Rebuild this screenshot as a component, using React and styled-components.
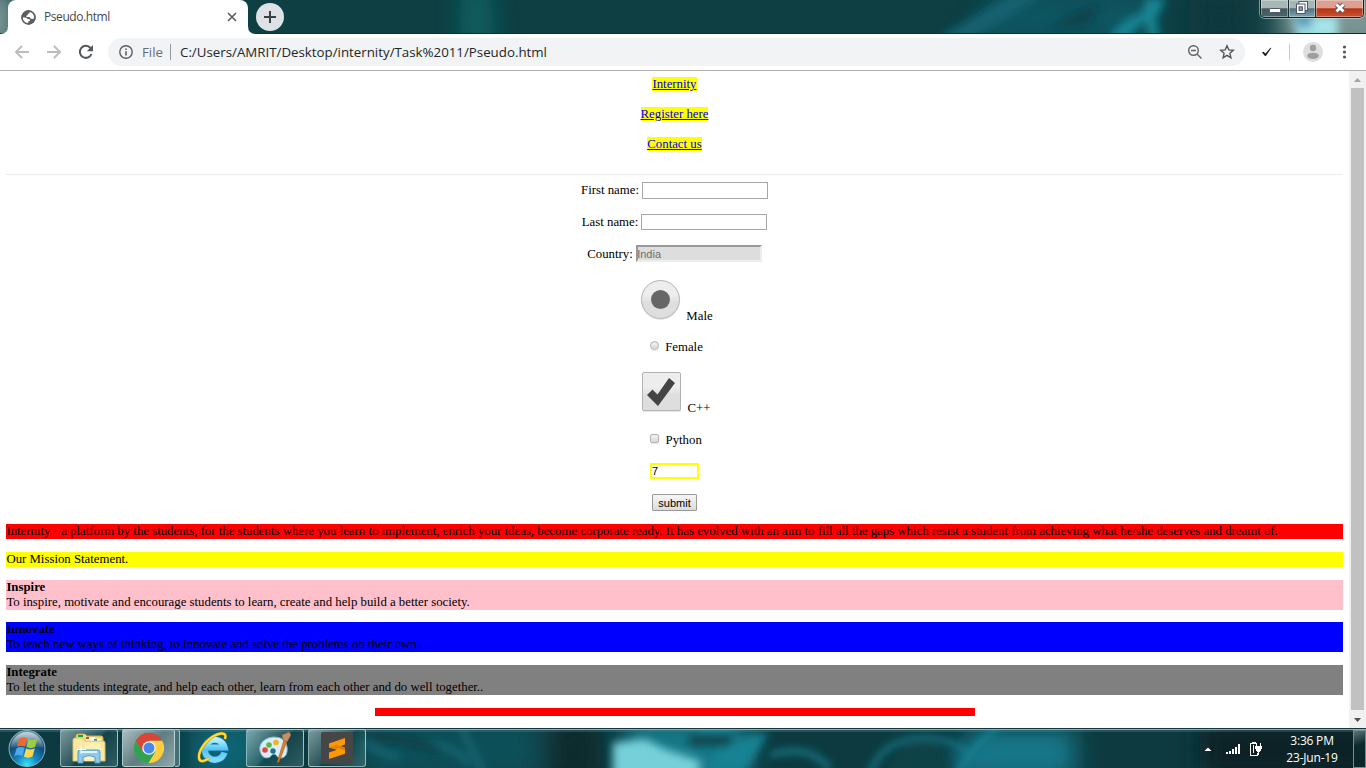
import React from 'react';
import styled, { createGlobalStyle } from 'styled-components';

const GlobalStyle = createGlobalStyle`
  * { box-sizing: border-box; }
  html, body { margin: 0; padding: 0; overflow: hidden; }
  svg { display: block; flex: none; }
`;

const ui = `'Open Sans', 'Noto Sans', sans-serif`;

const Screen = styled.div`
  width: 1366px;
  height: 768px;
  display: flex;
  flex-direction: column;
  background: #fff;
  overflow: hidden;
`;

/* ---------- title bar ---------- */
const TitleBar = styled.header`
  position: relative;
  height: 34px;
  flex: none;
  display: flex;
  background: #0d3f43;
  overflow: hidden;
`;
const Wallpaper = styled.svg`
  position: absolute;
  inset: 0;
`;
const Tab = styled.div`
  position: relative;
  width: 240px;
  height: 34px;
  margin-left: 8px;
  padding: 0 10px 0 13px;
  display: flex;
  align-items: center;
  background: #fff;
  border-radius: 8px 8px 0 0;
  font: 12px/34px ${ui};
  color: #45494d;
`;
const Flare = styled.svg`
  position: absolute;
  bottom: 0;
  ${(p) => (p.$side === 'left' ? 'left: -8px;' : 'right: -8px; transform: scaleX(-1);')}
`;
const TabTitle = styled.span`
  flex: 1;
  margin-left: 8px;
  letter-spacing: ${(p) => p.$track}px;
`;
const NewTab = styled.div`
  position: relative;
  width: 28px;
  height: 28px;
  margin: 3px 0 0 8px;
  border-radius: 50%;
  background: #dee1e6;
  display: flex;
  align-items: center;
  justify-content: center;
`;
const WindowControls = styled.div`
  position: relative;
  display: flex;
  width: 104px;
  height: 18px;
  margin: 0 2px 0 auto;
  border: 1px solid #122022;
  border-top: 0;
  border-radius: 0 0 5px 5px;
  box-shadow: 0 0 0 1px rgba(215, 235, 235, 0.5);
  overflow: hidden;
`;
const Control = styled.div`
  width: ${(p) => p.$w}px;
  display: flex;
  align-items: center;
  justify-content: center;
  padding-bottom: 2px;
  background: ${(p) => p.$bg};
  box-shadow: inset 0 0 0 1px rgba(230, 240, 240, 0.4);
  border-right: ${(p) => (p.$last ? '0' : '1px solid #1b2c2e')};
`;

/* ---------- toolbar ---------- */
const Toolbar = styled.div`
  height: 37px;
  flex: none;
  display: flex;
  align-items: center;
  padding: 0 13px 1px 12px;
  border-bottom: 1px solid #b1b1b1;
  background: #fff;
`;
const NavIcons = styled.div`
  display: flex;
  gap: 12px;
  width: 96px;
`;
const Omnibox = styled.div`
  width: 1137px;
  height: 28px;
  border-radius: 14px;
  background: #f1f3f4;
  display: flex;
  align-items: center;
  padding: 0 10px 0 10px;
  font: 13.3px/28px ${ui};
  color: #23262a;
`;
const Scheme = styled.span`
  width: 28px;
  margin-left: 8px;
  color: #6a6e73;
`;
const Divider = styled.span`
  width: 1px;
  height: 16px;
  margin-left: ${(p) => p.$ml || 0}px;
  background: ${(p) => p.$color};
`;
const Url = styled.span`
  flex: 1;
  margin-left: 9px;
`;
const OmniIcons = styled.div`
  display: flex;
  gap: 16px;
`;
const Extensions = styled.div`
  flex: 1;
  display: flex;
  align-items: center;
  justify-content: space-between;
  padding-left: 15px;
`;

/* ---------- page ---------- */
const Viewport = styled.main`
  height: 657px;
  flex: none;
  display: flex;
`;
const Page = styled.div`
  width: 1349px;
  padding: 6px 6px 0;
  font: 12.8px/15px 'Liberation Serif', serif;
  color: #000;
`;
const Row = styled.div`
  display: flex;
  justify-content: center;
  align-items: ${(p) => p.$align || 'center'};
  height: ${(p) => p.$h}px;
  margin-bottom: ${(p) => p.$gap}px;
  white-space: nowrap;
`;
const Link = styled.a`
  background: #ff0;
  color: #0000ee;
  height: 14px;
  line-height: 14px;
  text-decoration: underline;
`;
const Rule = styled.hr`
  height: 1px;
  margin: 0 0 7px;
  border: 0;
  background: #ececec;
`;
const Label = styled.label`
  margin-left: ${(p) => p.$ml || 0}px;
  margin-right: ${(p) => p.$mr || 0}px;
  position: relative;
  top: ${(p) => p.$drop || 0}px;
`;
const Field = styled.input`
  width: 126px;
  height: ${(p) => p.$h}px;
  padding: 0 1px;
  margin: 0;
  border-radius: 0;
  outline: 0;
  font: 11px 'Liberation Sans', sans-serif;
  color: #000;
  background: #fff;
  border: 1px solid #a6a6a6;
  &:disabled {
    color: #6d6d6d;
    background: #ddd;
    padding: 0;
    border: 2px solid;
    border-color: #999 #eee #eee #999;
    text-indent: -0.6px;
  }
`;
const NumberField = styled.input`
  width: 49px;
  height: 16px;
  padding: 0;
  margin: 0;
  border: 2px solid #ff0;
  outline: 0;
  font: 11px 'Liberation Sans', sans-serif;
  color: #000;
`;
const Choice = styled.span`
  width: ${(p) => p.$size}px;
  height: ${(p) => p.$size}px;
  border: 1px solid #b3b3b3;
  border-radius: ${(p) => (p.$round ? '50%' : '2px')};
  background: linear-gradient(#ededed 38%, #dedede 60%);
  box-shadow: 0 1px 1px rgba(0, 0, 0, 0.1);
  display: flex;
  align-items: center;
  justify-content: center;
  position: relative;
  top: ${(p) => p.$lift || 0}px;
`;
const Dot = styled.span`
  width: 19px;
  height: 19px;
  border-radius: 50%;
  background: #666;
`;
const Submit = styled.button`
  width: 45px;
  height: 17px;
  padding: 0;
  margin: 0;
  border: 1px solid #9a9a9a;
  border-radius: 1px;
  background: linear-gradient(#f6f6f6, #dcdcdc);
  font: 11px/16px 'Liberation Sans', sans-serif;
  color: #000;
`;
const Statement = styled.section`
  background: ${(p) => p.$bg};
  height: ${(p) => p.$h}px;
  margin-bottom: ${(p) => p.$gap}px;
  padding-left: 0.4px;
  white-space: nowrap;
`;
const Line = styled.div`
  font-weight: ${(p) => (p.$bold ? 700 : 400)};
  letter-spacing: ${(p) => p.$track || 0}px;
`;
const RedBar = styled.div`
  width: 600px;
  height: 8px;
  margin: 0 0 0 369px;
  background: #f00;
`;
const Scrollbar = styled.div`
  width: 17px;
  display: flex;
  flex-direction: column;
  align-items: center;
  background: #f1f1f1;
`;
const ScrollArrow = styled.div`
  height: 17px;
  display: flex;
  align-items: center;
`;
const Thumb = styled.div`
  width: 13px;
  height: 622px;
  margin-bottom: 1px;
  background: #c1c1c1;
`;

/* ---------- taskbar ---------- */
const Taskbar = styled.footer`
  position: relative;
  height: 40px;
  flex: none;
  display: flex;
  background: #0d3a40;
  border-top: 1px solid #17363c;
  overflow: hidden;
`;
const Start = styled.div`
  position: relative;
  width: 60px;
  padding: 0 0 0 8px;
`;
const TaskButton = styled.div`
  position: relative;
  width: ${(p) => p.$w}px;
  height: 38px;
  margin-right: ${(p) => p.$gap}px;
  padding-right: ${(p) => p.$pr || 0}px;
  display: flex;
  align-items: center;
  justify-content: center;
  border: 1px solid ${(p) => (p.$plain ? 'transparent' : 'rgba(205,232,232,.6)')};
  border-radius: 3px;
  background: ${(p) =>
    p.$plain
      ? 'none'
      : p.$active
      ? 'linear-gradient(135deg, rgba(225,235,235,.75), rgba(150,170,172,.6) 50%, rgba(190,205,206,.75))'
      : 'linear-gradient(135deg, rgba(190,215,215,.62), rgba(90,130,135,.38) 48%, rgba(35,85,92,.3) 52%, rgba(95,150,155,.4))'};
`;
const Stack = styled.div`
  position: relative;
  width: 5px;
  height: 38px;
  margin-right: 12px;
  border: 1px solid rgba(215, 235, 235, 0.65);
  border-left: 0;
  border-radius: 0 3px 3px 0;
  background: rgba(130, 160, 162, 0.5);
`;
const Tray = styled.div`
  position: relative;
  width: 162px;
  margin-left: auto;
  display: flex;
  align-items: center;
  font: 12px/17px ${ui};
  color: #fff;
`;
const Clock = styled.div`
  width: 80px;
  margin: 0 0 0 8px;
  text-align: center;
  letter-spacing: -0.2px;
  white-space: nowrap;
`;
const ShowDesktop = styled.div`
  width: 13px;
  height: 38px;
  margin-left: auto;
  border: 1px solid #6e8f8f;
  background: linear-gradient(160deg, #5b7474, #0c2a2b 40%, #0d2526);
`;

const Blurs = () => (
  <defs>
    <filter id="soft" x="-50%" y="-50%" width="200%" height="200%"><feGaussianBlur stdDeviation="4" /></filter>
    <filter id="wide" x="-50%" y="-50%" width="200%" height="200%"><feGaussianBlur stdDeviation="12" /></filter>
  </defs>
);

function TitleWallpaper() {
  return (
    <Wallpaper width="1366" height="34">
      <Blurs />
      <g filter="url(#wide)">
        <rect x="-30" y="-10" width="45" height="60" fill="#7f9999" />
        <path d="M462-20h26l8 70h-36z" fill="#0f6062" />
        <path d="M1000-10h150v55H960z" fill="#0d5560" />
        <rect x="1190" y="-10" width="60" height="60" fill="#0c383c" />
        <rect x="1280" y="-10" width="110" height="60" fill="#7c9593" />
      </g>
      <g filter="url(#soft)">
        <path d="M935 40L1012-6h34L970 40z" fill="#12606f" />
        <path d="M1050 30q20-20 50-26l-10 22z" fill="#0c454d" />
        <path d="M1108 38q12-18 34-26l4-14h20l-10 22 4 20h-10l-6-20-16 18z" fill="#158493" />
        <path d="M1292 16h46v22h-40z" fill="#a5e4e8" />
        <path d="M1294 14h18v14h-14z" fill="#579fc0" />
      </g>
      <rect y="33" width="1366" height="1" fill="#0b2f34" />
    </Wallpaper>
  );
}

function TaskWallpaper() {
  return (
    <Wallpaper width="1366" height="40">
      <g filter="url(#wide)">
        <rect x="190" y="-10" width="70" height="60" fill="#0d6472" />
        <rect x="360" y="-10" width="180" height="60" fill="#0f4f59" />
        <ellipse cx="575" cy="25" rx="26" ry="40" fill="#0c292c" />
        <rect x="625" y="-10" width="125" height="60" fill="#147887" />
        <path d="M975 0h100v50H940z" fill="#12788b" />
        <rect x="1200" y="-10" width="190" height="60" fill="#0a2426" />
      </g>
      <g filter="url(#soft)">
        <path d="M362 12q14 12 38 16M400 14q50-5 70 22M460-4l24 48" stroke="#146b7a" strokeWidth="5" fill="none" />
        <path d="M370 2q40 2 70 16v8q-30-12-70-14z" fill="#0d4046" />
        <path d="M613 14l32-4 20 10 36 12-6 25h-82z" fill="#74d0d9" />
        <path d="M690 6h42v11h-44z" fill="#0b454d" />
        <path d="M700 42q30-36 68-38l-22 38z" fill="#168293" />
        <path d="M770 26q40-12 60 14M700 0h30" stroke="#178393" strokeWidth="5" fill="none" />
        <path d="M870 45q12-38 60-36 24 2 36 14M958 45q14-30 40-45" stroke="#178a9b" strokeWidth="4" fill="none" />
        <path d="M885 45q8-28 42-28 18 0 26 28z" fill="#0d4247" />
      </g>
      <rect width="1366" height="1" fill="#83b3b5" />
      <rect y="1" width="1366" height="2" fill="#4b8a91" opacity=".35" />
    </Wallpaper>
  );
}

const Globe = () => (
  <svg width="15" height="15" viewBox="0 0 15 15">
    <circle cx="7.5" cy="7.5" r="7.2" fill="#5b5f64" />
    <path d="M8.3 1.9l.2 1.4-2 .6-.1 1.6-1.4.6.2 1.2h3.2l1 1.6 1 .4-.3 1.6-1.6.8-.6 1.6-1 .4v-2L5.5 9.9l-.1-1.4-3.5-1z" fill="#fff" opacity=".0" />
    <path d="M1.6 7.2l3.6.6 1.6 1.3 1.9.1.3 1.5-1.6.8-.5 2.1C4 13.3 1.7 11 1.6 7.2zM8.4 1.6l.3 1.6-1.8.6-.3 1.4-1.4.5.3 1.2h3.1l.8 1.6 1.6.5 2.3-.4C13.500 5 11.600 2 8.400 1.600z" fill="#fff" />
    <circle cx="7.500" cy="7.500" r="6.500" fill="none" stroke="#5b5f64" strokeWidth="1.400" />
  </svg>
);
const Arrow = ({ flip }) => (
  <svg width="20" height="20" viewBox="0 0 20 20" fill="none" stroke="#babcbe" strokeWidth="1.9">
    <path d={flip ? 'M3 10h13M10 4l6 6-6 6' : 'M17 10H4M10 4l-6 6 6 6'} />
  </svg>
);

function StartOrb() {
  return (
    <svg width="38" height="38" viewBox="0 0 38 38">
      <defs>
        <radialGradient id="orb" cx=".5" cy=".95" r=".95">
          <stop offset="0" stopColor="#35e7ff" /><stop offset=".3" stopColor="#168bc4" />
          <stop offset=".65" stopColor="#124a75" /><stop offset="1" stopColor="#6d93a6" />
        </radialGradient>
        <linearGradient id="shine" x2="0" y2="1"><stop stopColor="#fff" stopOpacity=".65" /><stop offset="1" stopColor="#fff" stopOpacity=".08" /></linearGradient>
      </defs>
      <circle cx="19" cy="19.5" r="18" fill="url(#orb)" stroke="#87b3bf" strokeWidth="1" />
      <path d="M3 19a16 16 0 0 1 32 0q-16-5-32 0z" fill="url(#shine)" />
      <path d="M11 10q4-3 8-.5l-2 8.200q-4-2-8 .1z" fill="#ee6a2c" />
      <path d="M20.4 10q4 2.300 9-.3l-2.300 8.300q-4.500 2.300-8.700 0z" fill="#9dcc3f" />
      <path d="M8.6 19.200q4-2.200 8-.2l-2.200 8q-4-2-8 .2z" fill="#4ea9e8" />
      <path d="M18.1 19.500q4.300 2.200 8.700-.2l-2.300 8.300q-4.500 2.200-8.600-.2z" fill="#ffd451" />
    </svg>
  );
}
function ExplorerIcon() {
  return (
    <svg width="34" height="32" viewBox="0 0 34 32">
      <path d="M4 4q0-2 2-2h7l2 2h14q2 0 2 2v22H4z" fill="#f1dc8a" stroke="#c4a847" />
      <path d="M6 3h5v2H6z" fill="#18a33b" /><path d="M14 5h9v4h-9zM22 7h7v3h-7z" fill="#fff" />
      <path d="M14 5h3v2h-3z" fill="#d44a31" /><path d="M22 7h3v2h-3z" fill="#268ee0" />
      <path d="M1 8q0-2 2-2h8l2 3h18q2 0 2 2v18H1z" fill="#f8e8a3" stroke="#d9bf65" />
      <path d="M13 10l16 2v17H13z" fill="#fff3bd" opacity=".7" />
      <path d="M6 31V20q0-2 2-2h18q2 0 2 2v11h-5v-6q-6-3-12 0v6z" fill="#8dcbec" stroke="#4e9ccc" />
      <path d="M9 20h16" stroke="#e1f6ff" strokeWidth="2" />
      <path d="M9 13v9M5 17.500h9" stroke="#fff" />
    </svg>
  );
}
function ChromeIcon() {
  return (
    <svg width="30" height="30" viewBox="0 0 30 30">
      <circle cx="15" cy="15" r="15" fill="#2fa34f" />
      <path d="M28 7.500A15 15 0 0 1 14.500 30L21.500 18.600 15 7.500z" fill="#ffcd40" />
      <path d="M2 7.500A15 15 0 0 1 28 7.500H15L8.500 18.600z" fill="#db4437" />
      <circle cx="15" cy="15" r="6.800" fill="#f4f6f6" /><circle cx="15" cy="15" r="5.500" fill="#4a86ec" />
    </svg>
  );
}
function ExplorerE() {
  return (
    <svg width="34" height="34" viewBox="0 0 34 34" fill="none">
      <defs><linearGradient id="ie" x2="0" y2="1"><stop stopColor="#b1efff" /><stop offset=".5" stopColor="#4ec4f1" /><stop offset="1" stopColor="#7bdcfa" /></linearGradient></defs>
      <path d="M28.5 21.500A10 10 0 1 1 28.600 16.500H12" stroke="#246ba5" strokeWidth="7.4" />
      <path d="M28.5 21.500A10 10 0 1 1 28.600 16.500H12" stroke="url(#ie)" strokeWidth="6" />
      <path d="M29 8q2-6-4-5.500C14 4 2 18 3 27q1 6 10 .5" stroke="#d99b05" strokeWidth="3" />
      <path d="M29 8q2-6-4-5.500C14 4 2 18 3 27q1 6 10 .5" stroke="#ffe13c" strokeWidth="1.9" />
    </svg>
  );
}
function PaintIcon() {
  return (
    <svg width="34" height="34" viewBox="0 0 34 34">
      <path d="M3 20C1 12 9 6 17 6q12 0 13 10c1 7-2 11-6 11-4 1-4-4-7-4s-3 4-7 4-6-3-7-7z" fill="#d8edf7" stroke="#7eb3d0" />
      <circle cx="16" cy="20" r="2.7" fill="#23728a" /><circle cx="8" cy="19" r="2.8" fill="#e4473c" />
      <circle cx="12" cy="14" r="2.8" fill="#58b947" /><circle cx="19" cy="11.5" r="2.8" fill="#f3b221" />
      <path d="M27 9l3 1-8 21-2 1z" fill="#e48023" stroke="#a55217" strokeWidth=".6" />
      <path d="M25 4l7-3 2 3-4 7-4-2z" fill="#c29364" stroke="#8a633f" strokeWidth=".6" />
    </svg>
  );
}
const SublimeIcon = () => (
  <svg width="32" height="32" viewBox="0 0 32 32">
    <rect width="32" height="32" rx="2" fill="#464646" />
    <path d="M8 11.500L24 6v6.500l-8 2.700 8 2.600v4L8 27v-6.500l8-2.700-8-2.400z" fill="#ff9800" />
    <path d="M8 15.400l8-2.600 8 2.800v2.200l-8-2.600v2.600z" fill="#e08600" />
  </svg>
);

export default function App() {
  return (
    <Screen>
      <GlobalStyle />
      <TitleBar>
        <TitleWallpaper />
        <Tab>
          <Flare $side="left" width="8" height="8"><path d="M8 0v8H0q8 0 8-8z" fill="#fff" /></Flare>
          <Flare $side="right" width="8" height="8"><path d="M8 0v8H0q8 0 8-8z" fill="#fff" /></Flare>
          <Globe />
          <TabTitle $track={-0.42}>Pseudo.html</TabTitle>
          <svg width="12" height="12" stroke="#5b5f64" strokeWidth="1.7"><path d="M2 2l8 8M10 2l-8 8" /></svg>
        </Tab>
        <NewTab><svg width="14" height="14" stroke="#3c4043" strokeWidth="2"><path d="M7 1v12M1 7h12" /></svg></NewTab>
        <WindowControls>
          <Control $w={28} $bg="linear-gradient(#a7b7b6 45%, #42595d 52%, #48656a)">
            <svg width="12" height="16"><rect x=".5" y="8.5" width="11" height="4" rx="1" fill="#fff" stroke="#515967" /></svg>
          </Control>
          <Control $w={27} $bg="linear-gradient(#a7b7b6 45%, #52717a 52%, #7ba5b5)">
            <svg width="12" height="13" viewBox="0 0 12 13"><rect x="3" y=".5" width="8.5" height="9" fill="#fff" stroke="#515967" /><rect x=".5" y="3" width="8.5" height="9.5" fill="#fff" stroke="#515967" /><rect x="3" y="5.8" width="3.4" height="3.6" fill="#7ba0b0" stroke="#515967" /></svg>
          </Control>
          <Control $w={47} $last $bg="linear-gradient(#dda091 45%, #b63417 52%, #cc5130)">
            <svg width="14" height="14" fill="none"><path d="M3.5 3.500l7 7M10.500 3.500l-7 7" stroke="#515967" strokeWidth="4.6" /><path d="M3.500 3.500l7 7M10.500 3.500l-7 7" stroke="#fff" strokeWidth="2.8" /></svg>
          </Control>
        </WindowControls>
      </TitleBar>

      <Toolbar>
        <NavIcons>
          <Arrow /><Arrow flip />
          <svg width="20" height="20" viewBox="0 0 20 20" fill="none"><path d="M15.5 12A6 6 0 1 1 14.500 6" stroke="#53575b" strokeWidth="2" /><path d="M17 3v6.200h-6.200z" fill="#53575b" /></svg>
        </NavIcons>
        <Omnibox>
          <svg width="16" height="16" viewBox="0 0 16 16" fill="none" stroke="#5b5f64"><circle cx="8" cy="8" r="6.2" strokeWidth="1.4" /><path d="M8 7.200v4.200M8 4.500v1.600" strokeWidth="1.6" /></svg>
          <Scheme>File</Scheme>
          <Divider $color="#94979b" />
          <Url>C:/Users/AMRIT/Desktop/internity/Task%2011/Pseudo.html</Url>
          <OmniIcons>
            <svg width="16" height="16" viewBox="0 0 16 16" fill="none" stroke="#5f6368" strokeWidth="1.4"><circle cx="6.5" cy="6.5" r="4.8" /><path d="M10 10l4.500 4.500M4 6.500h5" /></svg>
            <svg width="16" height="16" viewBox="0 0 16 16" fill="none" stroke="#53575b" strokeWidth="1.4"><path d="M8 1.800l1.800 4.100 4.500.4-3.400 3 1 4.400L8 11.400l-3.900 2.300 1-4.400-3.400-3 4.500-.4z" /></svg>
          </OmniIcons>
        </Omnibox>
        <Extensions>
          <svg width="14" height="14" viewBox="0 0 14 14"><path d="M2 7.500l1.500-.8 2 1.900L10.200 3l1.300-.2-5.600 8.100H5z" fill="#1c1c1c" /></svg>
          <Divider $color="#c5c9cc" $ml={3} />
          <svg width="20" height="20" viewBox="0 0 20 20"><circle cx="10" cy="10" r="10" fill="#dedede" /><circle cx="10" cy="6" r="3.2" fill="#9e9e9e" /><ellipse cx="10" cy="13.8" rx="5.8" ry="3.1" fill="#9e9e9e" /></svg>
          <svg width="18" height="18" fill="#53575b"><circle cx="9.5" cy="4" r="1.6" /><circle cx="9.5" cy="9" r="1.6" /><circle cx="9.5" cy="14" r="1.6" /></svg>
        </Extensions>
      </Toolbar>

      <Viewport>
        <Page>
          <Row $h={15} $gap={15} $align="flex-start"><Link>Internity</Link></Row>
          <Row $h={15} $gap={15} $align="flex-start"><Link>Register here</Link></Row>
          <Row $h={15} $gap={22} $align="flex-start"><Link>Contact us</Link></Row>
          <Rule />
          <Row $h={17} $gap={15}><Label $mr={3}>First name:</Label><Field $h={17} /></Row>
          <Row $h={16} $gap={15}><Label $mr={3}>Last name:</Label><Field $h={16} /></Row>
          <Row $h={17} $gap={18}><Label $mr={3} $drop={1}>Country:</Label><Field $h={17} disabled defaultValue="India" /></Row>
          <Row $h={39} $gap={20} $align="flex-end">
            <Label $ml={5} /><Choice $size={39} $round><Dot /></Choice><Label $ml={6} $drop={5}>Male</Label>
          </Row>
          <Row $h={15} $gap={18}><Label $ml={4} /><Choice $size={9} $round $lift={-1} /><Label $ml={6} $drop={1}>Female</Label></Row>
          <Row $h={39} $gap={21} $align="flex-end">
            <Label $ml={3.6} />
            <Choice $size={39}>
              <svg width="33" height="33" viewBox="0 0 33 33"><path d="M2 20l5.500-5.500 5 5L24 3l6 5L13 31z" fill="#444" /></svg>
            </Choice>
            <Label $ml={6.4} $drop={5}>C++</Label>
          </Row>
          <Row $h={15} $gap={16}><Label $ml={3} /><Choice $size={9} $lift={-1} /><Label $ml={6.4} $drop={1}>Python</Label></Row>
          <Row $h={16} $gap={15}><NumberField defaultValue="7" /></Row>
          <Row $h={17} $gap={13}><Submit>submit</Submit></Row>

          <Statement $bg="#f00" $h={15} $gap={13}>
            <Line $track={0.003}>Internity - a platform by the students, for the students where you learn to implement, enrich your ideas, become corporate ready. It has evolved with an aim to fill all the gaps which resist a student from achieving what he/she deserves and dreamt of.</Line>
          </Statement>
          <Statement $bg="#ff0" $h={15} $gap={13}><Line>Our Mission Statement.</Line></Statement>
          <Statement $bg="#ffc0cb" $h={30} $gap={12}>
            <Line $bold>Inspire</Line>
            <Line>To inspire, motivate and encourage students to learn, create and help build a better society.</Line>
          </Statement>
          <Statement $bg="#00f" $h={30} $gap={13}>
            <Line $bold>Innovate</Line>
            <Line>To teach new ways of thinking, to innovate and solve the problems on their own..</Line>
          </Statement>
          <Statement $bg="#808080" $h={30} $gap={13}>
            <Line $bold>Integrate</Line>
            <Line>To let the students integrate, and help each other, learn from each other and do well together..</Line>
          </Statement>
          <RedBar />
        </Page>
        <Scrollbar>
          <ScrollArrow><svg width="7" height="4"><path d="M3.5 0L7 4H0z" fill="#a3a3a3" /></svg></ScrollArrow>
          <Thumb />
          <ScrollArrow><svg width="7" height="4"><path d="M3.5 4L7 0H0z" fill="#505050" /></svg></ScrollArrow>
        </Scrollbar>
      </Viewport>

      <Taskbar>
        <TaskWallpaper />
        <Start><StartOrb /></Start>
        <TaskButton $w={58} $gap={4}><ExplorerIcon /></TaskButton>
        <TaskButton $w={53} $gap={0} $active><ChromeIcon /></TaskButton>
        <Stack />
        <TaskButton $w={46} $gap={8} $pr={4} $plain><ExplorerE /></TaskButton>
        <TaskButton $w={58} $gap={4} $pr={2}><PaintIcon /></TaskButton>
        <TaskButton $w={58} $gap={0}><SublimeIcon /></TaskButton>
        <Tray>
          <svg width="60" height="18" viewBox="0 0 60 18" shapeRendering="crispEdges">
            <path d="M4 7.500L0.500 11h7z" fill="#fff" shapeRendering="auto" />
            <path d="M22 12h2v2h-2zM25 11h2v3h-2zM28 9h2v5h-2zM31 7h2v7h-2zM34 4h2v10h-2z" fill="#fff" />
            <path d="M46 3h2V2h4v1h1v1h-6v11h6v-2h1v3h-8z" fill="#fff" />
            <path d="M49 5h1v8h-1z" fill="#fff" />
            <path d="M51 6h7v3h-1v2h-1v1h-1v3h-1v-3h-1v-1h-1V9h-1zM52 3h1v3h-1zM56 3h1v3h-1z" fill="#fff" />
          </svg>
          <Clock>3:36 PM<br />23-Jun-19</Clock>
          <ShowDesktop />
        </Tray>
      </Taskbar>
    </Screen>
  );
}
